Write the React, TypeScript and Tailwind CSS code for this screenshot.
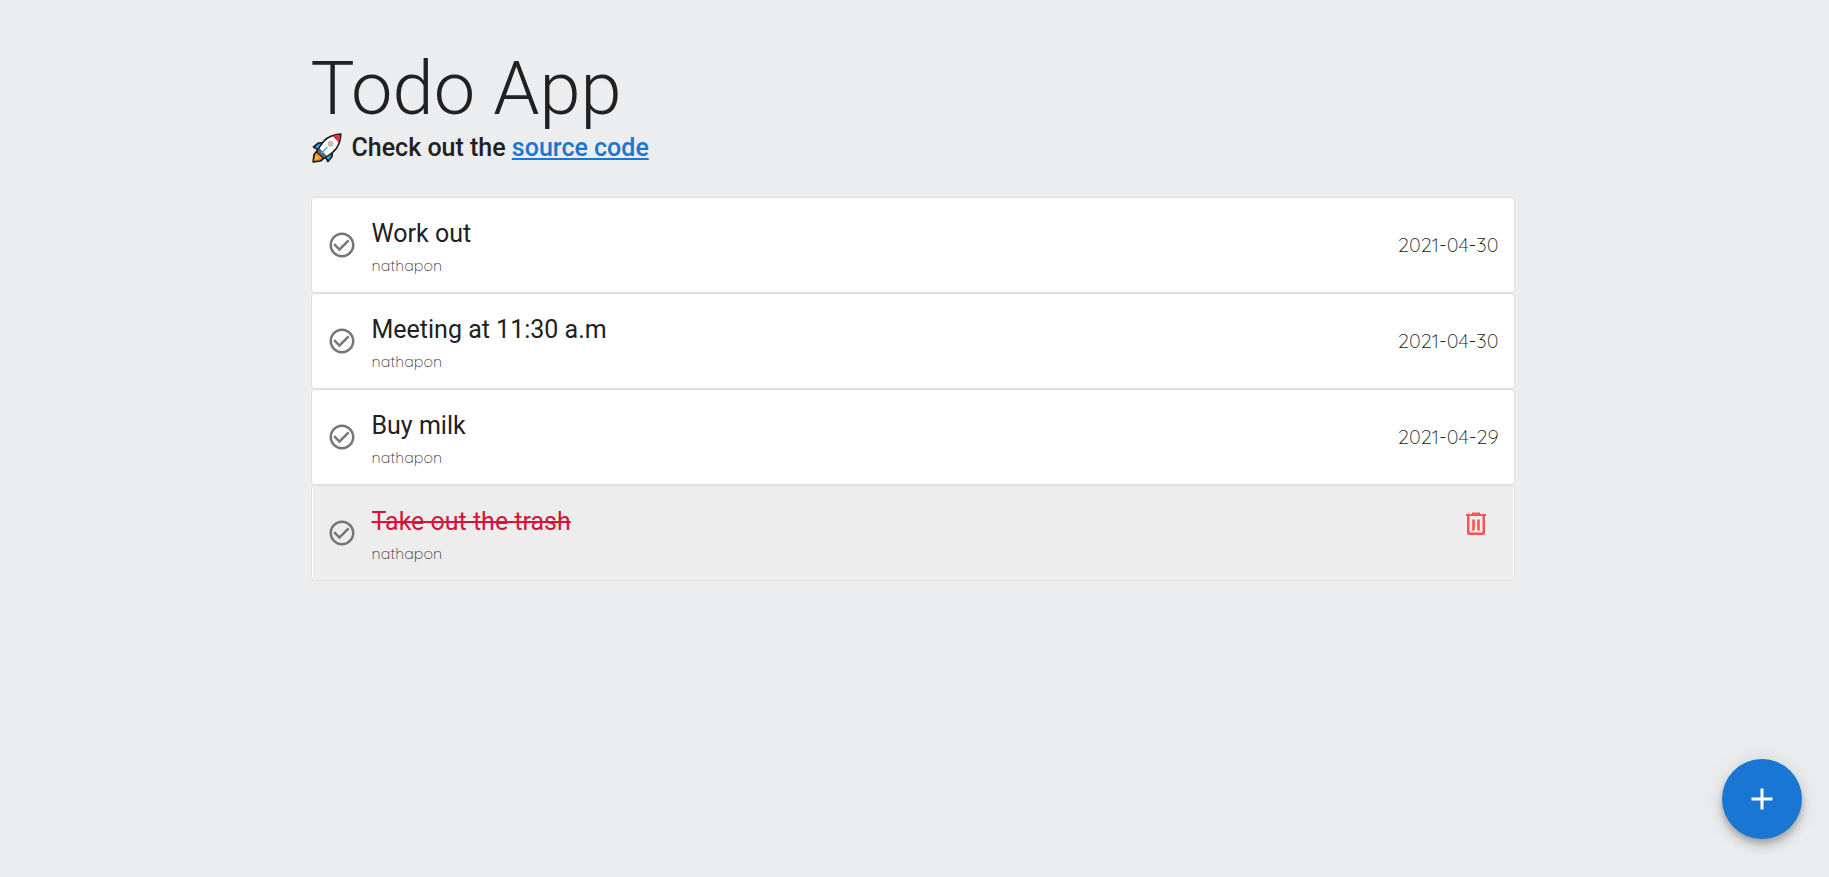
import { useState } from "react";

type Todo = { id: number; title: string; author: string; date: string; done: boolean };

const initialTodos: Todo[] = [
  { id: 1, title: "Work out", author: "nathapon", date: "2021-04-30", done: false },
  { id: 2, title: "Meeting at 11:30 a.m", author: "nathapon", date: "2021-04-30", done: false },
  { id: 3, title: "Buy milk", author: "nathapon", date: "2021-04-29", done: false },
  { id: 4, title: "Take out the trash", author: "nathapon", date: "2021-04-29", done: true },
];

function Rocket() {
  return (
    <svg viewBox="0 0 30 30" className="size-[30px] shrink-0" role="img" aria-label="rocket">
      <g stroke="#1d1d1d" strokeWidth="1.7" strokeLinejoin="round">
        <path d="M12 9.500 6.500 10 1.500 14 5 16 6 19z" fill="#28b4ea" />
        <path d="M20.500 18 20 23.500 16 28.500 14 25 11 24z" fill="#28b4ea" />
        <path d="M5 18 2 21.500 1.200 28.800 8.500 28 12 25z" fill="#f7822f" />
        <path d="M5 19C6.500 15 8.500 12 11.500 8.500 16 3.500 22 1.500 28.800 1.200 28.500 8 26.500 14 21.500 18.500 18.500 21.500 15.500 23.500 11.500 25z" fill="#fff" />
      </g>
      <path d="M3.500 22.500 7.500 23 6.500 26 2.300 27.700z" fill="#ffb12e" />
      <path d="M5.800 18.800 7.500 15.500 14.500 22.500 11.500 24.200z" fill="#5c6670" />
      <path d="M20.500 2.900C23 2.200 25.500 2 28 2 27.900 4.800 27.500 7.200 26.800 9.500z" fill="#e9283d" />
      <circle cx="18.500" cy="10.800" r="2.500" fill="#c5c5c5" stroke="#a5a5a5" strokeWidth=".8" />
      <path d="M9.500 20 15 14.500" stroke="#28b4ea" strokeWidth="1.500" strokeLinecap="round" />
    </svg>
  );
}

function CheckIcon() {
  return (
    <svg viewBox="0 0 24 24" className="size-[30px]" fill="currentColor" aria-hidden="true">
      <path d="M16.590 7.580 10 14.170l-3.590-3.580L5 12l5 5 8-8zM12 2C6.480 2 2 6.480 2 12s4.480 10 10 10 10-4.480 10-10S17.520 2 12 2zm0 18c-4.420 0-8-3.580-8-8s3.580-8 8-8 8 3.580 8 8-3.580 8-8 8z" />
    </svg>
  );
}

function TrashIcon() {
  return (
    <svg viewBox="0 0 24 26" className="h-[26px] w-6" fill="currentColor" aria-hidden="true">
      <path fillRule="evenodd" d="M8 1.500h8V3h6v2h-1v17q0 2-2 2H5q-2 0-2-2V5H2V3h6zM5.500 5v16.500h13V5zM8.200 8.500h2.600v11H8.200zM13.200 8.500h2.600v11h-2.600z" />
    </svg>
  );
}

export default function App() {
  const [todos, setTodos] = useState(initialTodos);
  const toggle = (id: number) =>
    setTodos((list) => list.map((t) => (t.id === id ? { ...t, done: !t.done } : t)));
  const remove = (id: number) => setTodos((list) => list.filter((t) => t.id !== id));

  return (
    <div className="min-h-screen bg-[#ecedef] pt-[45px] pr-1 font-[Roboto,sans-serif] text-[#212121]">
      <main className="mx-auto max-w-[1204px]">
        <h1 className="text-[74px] leading-[88px] font-light">Todo App</h1>
        <h2 className="flex items-center pl-px text-[25px] leading-[28px] font-medium">
          <Rocket />
          <span className="ml-2.5">
            Check out the{" "}
            <a href="#source" className="text-[#1976d2] underline">
              source code
            </a>
          </span>
        </h2>
        <ul className="mt-[34px]">
          {todos.map((todo) => (
            <li
              key={todo.id}
              className={`flex h-24 items-center rounded border border-[#dfdfdf] px-[15px] ${
                todo.done
                  ? "bg-[#ededed] shadow-[inset_1px_0_#fff,inset_-1px_0_#fff]"
                  : "bg-white"
              }`}
            >
              <button
                type="button"
                aria-label={`Toggle ${todo.title}`}
                onClick={() => toggle(todo.id)}
                className="mr-[15px] text-[#757575]"
              >
                <CheckIcon />
              </button>
              <div className="flex-1 pt-0.5">
                <p
                  className={`text-[25px] leading-[38px] ${
                    todo.done ? "text-[#d6133c] line-through" : ""
                  }`}
                >
                  {todo.title}
                </p>
                <p className="font-[Quicksand,Lato,sans-serif] text-[16px] leading-[24px] font-light text-[#333]">
                  {todo.author}
                </p>
              </div>
              {todo.done ? (
                <button
                  type="button"
                  aria-label={`Delete ${todo.title}`}
                  onClick={() => remove(todo.id)}
                  className="mr-[11px] mb-[18px] text-[#ff5252]"
                >
                  <TrashIcon />
                </button>
              ) : (
                <time className="font-[Quicksand,Lato,sans-serif] text-[20px] leading-[30px] font-light text-[#212121]">
                  {todo.date}
                </time>
              )}
            </li>
          ))}
        </ul>
      </main>
      <button
        type="button"
        aria-label="Add todo"
        className="fixed right-[27px] bottom-[38px] flex size-20 items-center justify-center rounded-full bg-[#1976d2] text-white shadow-[0_4px_6px_-1px_rgba(0,0,0,0.2),0_8px_12px_rgba(0,0,0,0.14),0_1px_22px_rgba(0,0,0,0.12)]"
      >
        <svg viewBox="0 0 24 24" className="size-9" fill="currentColor" aria-hidden="true">
          <path d="M19 13h-6v6h-2v-6H5v-2h6V5h2v6h6z" />
        </svg>
      </button>
    </div>
  );
}
